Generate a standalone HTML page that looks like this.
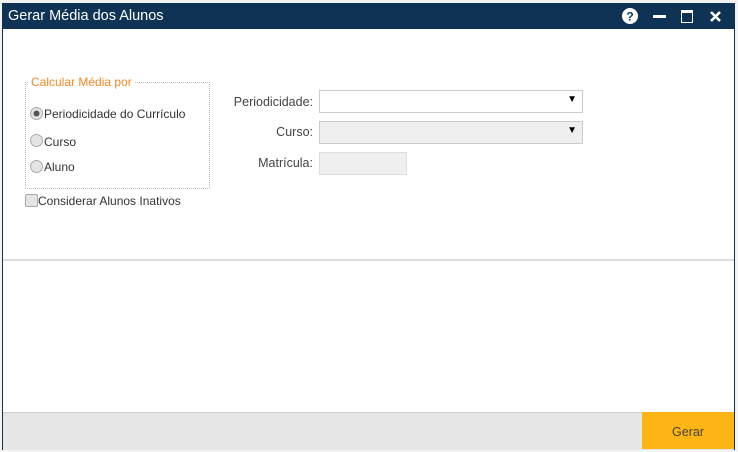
<!DOCTYPE html>
<html><head><style>
body{margin:0;width:738px;height:452px;background:#f3f3f3;position:relative;font-family:"Liberation Sans",sans-serif;overflow:hidden}
.win{position:absolute;left:2px;top:3px;width:731px;height:446px;background:#fff;border:1px solid #0f3354;border-top:none}
.title{position:absolute;top:0;width:733px;left:-1px;height:26px;background:#0f3354;color:#fff;font-size:14.5px;line-height:26px;text-indent:6px}
.lbl{position:absolute;font-size:12.5px;color:#444}
.r{position:absolute;font-size:12px;color:#333}
.inp{position:absolute;border:1px solid #ccc;box-sizing:border-box}
</style></head><body>
<div class="win">
<div class="title">Gerar Média dos Alunos
<svg style="position:absolute;left:620px;top:5px" width="16" height="16"><circle cx="8" cy="8" r="8" fill="#fff"/><text x="8" y="12.5" font-size="12" font-weight="bold" text-anchor="middle" fill="#0f3354" font-family="Liberation Sans">?</text></svg>
<div style="position:absolute;left:651px;top:12px;width:13px;height:3px;background:#fff"></div>
<div style="position:absolute;left:679px;top:7px;width:12px;height:13px;border:1.5px solid #fff;border-top-width:3px;box-sizing:border-box"></div>
<svg style="position:absolute;left:708px;top:8px" width="11" height="11"><path d="M1 1L10 10M10 1L1 10" stroke="#fff" stroke-width="2.6"/></svg>
</div>
<div style="position:absolute;left:22px;top:79px;width:183px;height:105px;border:1px dotted #bbb"></div>
<div style="position:absolute;left:25px;top:72px;background:#fff;color:#f5871f;font-size:12px;padding:0 3px">Calcular Média por</div>
<svg style="position:absolute;left:27px;top:104px" width="13" height="13"><circle cx="6.5" cy="6.5" r="6" fill="#e4e4e4" stroke="#aaa"/><circle cx="6.5" cy="6.5" r="3" fill="#555"/></svg>
<div class="r" style="left:41px;top:104px">Periodicidade do Currículo</div>
<svg style="position:absolute;left:27px;top:131px" width="13" height="13"><circle cx="6.5" cy="6.5" r="6" fill="#e4e4e4" stroke="#aaa"/></svg>
<div class="r" style="left:41px;top:132px">Curso</div>
<svg style="position:absolute;left:27px;top:157px" width="13" height="13"><circle cx="6.5" cy="6.5" r="6" fill="#e4e4e4" stroke="#aaa"/></svg>
<div class="r" style="left:41px;top:157px">Aluno</div>
<div style="position:absolute;left:22px;top:191px;width:11px;height:11px;border:1px solid #aaa;background:#e4e4e4;border-radius:2px"></div>
<div class="r" style="left:35px;top:191px">Considerar Alunos Inativos</div>
<div class="lbl" style="right:421px;top:92px">Periodicidade:</div>
<div class="lbl" style="right:421px;top:122px">Curso:</div>
<div class="lbl" style="right:421px;top:153px">Matrícula:</div>
<div class="inp" style="left:316px;top:87px;width:264px;height:23px;background:#fff"><span style="position:absolute;right:5px;top:3px;font-size:10px">▼</span></div>
<div class="inp" style="left:316px;top:118px;width:264px;height:23px;background:#efefef"><span style="position:absolute;right:5px;top:3px;font-size:10px">▼</span></div>
<div class="inp" style="left:316px;top:149px;width:88px;height:23px;background:#efefef;border-color:#ddd"></div>
<div style="position:absolute;left:0;top:256px;width:731px;height:2px;background:#ddd"></div>
<div style="position:absolute;left:0;top:409px;width:731px;height:37px;background:#e6e6e6;border-top:1px solid #d0d0d0"></div>
<div style="position:absolute;left:639px;top:409px;width:92px;height:37px;background:#fdb515;color:#444;font-size:12.5px;text-align:center;line-height:40px">Gerar</div>
</div>
</body></html>
